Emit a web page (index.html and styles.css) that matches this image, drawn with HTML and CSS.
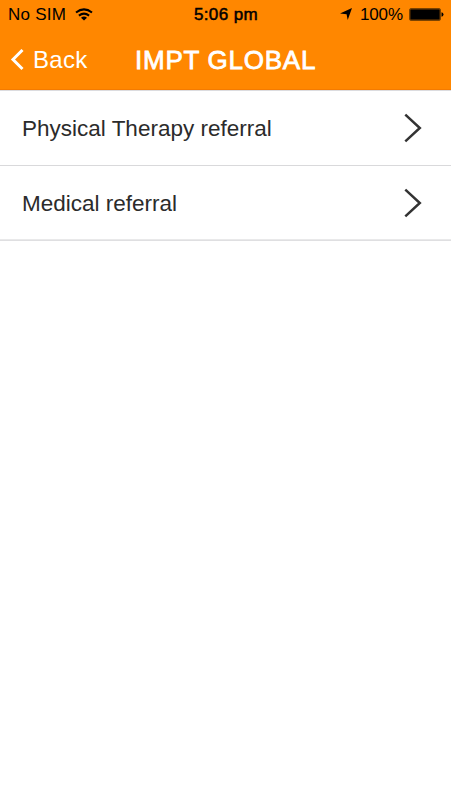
FILE: index.html
```html
<!DOCTYPE html>
<html lang="en">
<head>
<meta charset="utf-8">
<meta name="viewport" content="width=device-width, initial-scale=1">
<title>IMPT GLOBAL</title>
<link rel="stylesheet" href="styles.css">
</head>
<body>
<header class="header">
  <div class="status">
    <div class="status-left">
      <span class="carrier">No SIM</span>
      <svg class="wifi" width="18" height="13" viewBox="0 0 18 13" fill="none" stroke="#000" stroke-width="2">
        <path d="M1 4.5Q9 -1.8 17 4.5"/>
        <path d="M3.9 7.6Q9 3.6 14.1 7.6"/>
        <path d="M6 9.8Q9 7.4 12 9.8L9 12.6Z" fill="#000" stroke="none"/>
      </svg>
    </div>
    <span class="time">5:06 pm</span>
    <div class="status-right">
      <svg class="location" width="12" height="12" viewBox="0 0 12 12"><path d="M12 0L7.7 12L6.6 6.2L0 5.5Z"/></svg>
      <span class="percent">100%</span>
      <svg class="battery" width="35" height="13" viewBox="0 0 35 13">
        <rect x=".5" y=".5" width="31" height="12" rx="1.5" fill="none" stroke="#7a4300"/>
        <rect x="1.2" y="1.3" width="29.6" height="10.4" rx=".5"/>
        <path d="M32.5 4.3Q34.5 4.5 34.5 6.5T32.5 8.7Z"/>
      </svg>
    </div>
  </div>
  <nav class="nav">
    <a class="back">
      <svg width="14" height="22" viewBox="0 0 14 22" fill="none" stroke="#fff" stroke-width="3"><path d="M12.5 1L3 10.5L12.5 20"/></svg>
      <span class="back-label">Back</span>
    </a>
    <h1 class="title">IMPT GLOBAL</h1>
  </nav>
</header>
<main class="list">
  <a class="row">
    <span class="label">Physical Therapy referral</span>
    <svg width="18" height="30" viewBox="0 0 18 30" fill="none" stroke="#333" stroke-width="2.5"><path d="M1.3 1.7L15.8 15L1.3 28.3"/></svg>
  </a>
  <a class="row">
    <span class="label">Medical referral</span>
    <svg width="18" height="30" viewBox="0 0 18 30" fill="none" stroke="#333" stroke-width="2.5"><path d="M1.3 1.7L15.8 15L1.3 28.3"/></svg>
  </a>
</main>
</body>
</html>
```
FILE: styles.css
```css
* { box-sizing: border-box; }
body {
  margin: 0;
  background: #fff;
  font-family: "Liberation Sans", Arial, sans-serif;
}
svg { display: block; flex: none; }
.header {
  height: 91px;
  background: #ff8700;
  border-bottom: 1px solid #dcdcdf;
  box-shadow: inset 0 -1px #f47b00;
}
.status {
  display: grid;
  grid-template-columns: 1fr auto 1fr;
  height: 30px;
  align-items: center;
  padding: 0 7px 0 8px;
  font-size: 17px;
  line-height: 30px;
  color: #000;
}
.status-left, .status-right { display: flex; align-items: center; }
.status-right { justify-content: flex-end; }
.carrier { letter-spacing: 0.25px; }
.wifi { margin-left: 9px; margin-bottom: 2px; }
.time {
  font-size: 17px;
  letter-spacing: 0.4px;
  -webkit-text-stroke: 0.5px #000;
}
.location { margin-right: 8px; margin-bottom: 2px; }
.percent { margin-right: 6px; letter-spacing: -0.1px; }
.battery { margin-bottom: 1px; }
.nav {
  display: grid;
  grid-template-columns: 135px auto 1fr;
  height: 60px;
  align-items: center;
  color: #fff;
}
.back { display: flex; align-items: center; padding-left: 10px; }
.back-label { margin-left: 9px; font-size: 24px; line-height: 30px; letter-spacing: 0.3px; }
.title {
  margin: 0;
  font-size: 26px;
  font-weight: 400;
  line-height: 30px;
  letter-spacing: 0.75px;
  -webkit-text-stroke: 0.8px #fff;
}
.row {
  display: flex;
  height: 75px;
  align-items: center;
  justify-content: space-between;
  padding: 0 29px 0 22px;
  border-bottom: 1px solid #d9d9db;
  font-size: 22.5px;
  color: #2b2b2b;
}
.row:last-child {
  border-bottom-color: #dfdfe1;
  box-shadow: inset 0 -1px #e9e9ea;
}
.label { padding-top: 1px; }
```
